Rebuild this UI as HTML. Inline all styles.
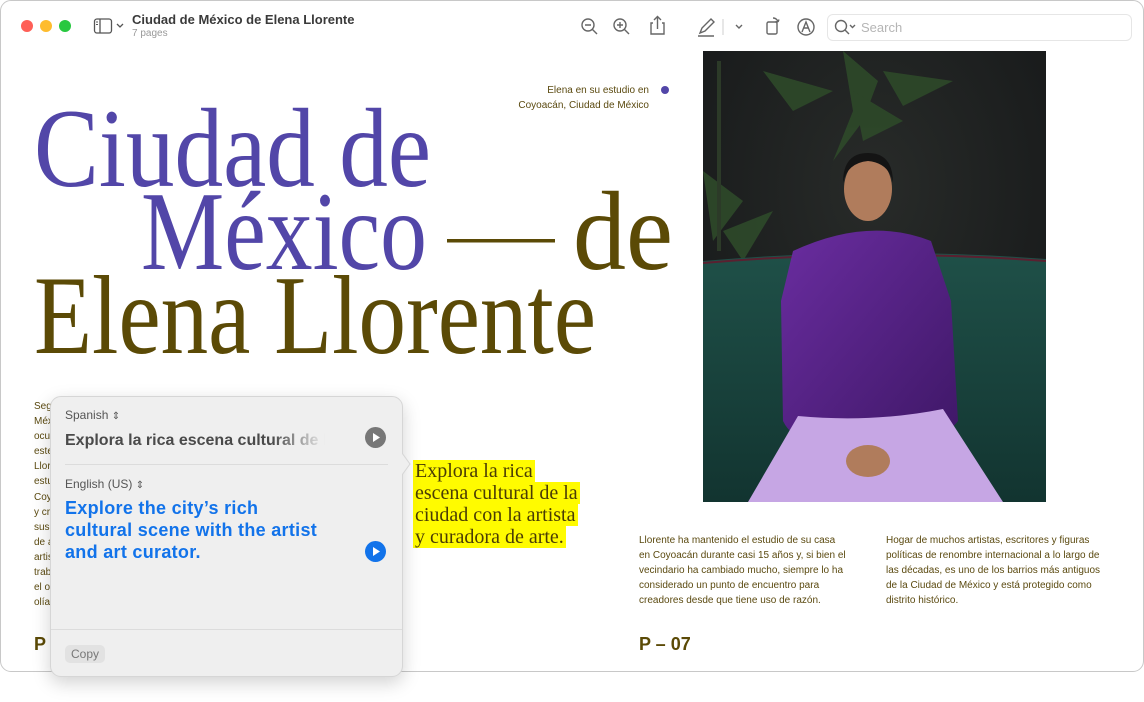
<!DOCTYPE html>
<html><head><meta charset="utf-8"><style>
*{margin:0;padding:0;box-sizing:border-box}
body{width:1144px;height:702px;background:#fff;position:relative;overflow:hidden;font-family:"Liberation Sans",sans-serif}
.win{position:absolute;left:0;top:0;width:1144px;height:672px;border:1px solid #c8c8c8;border-radius:11px;background:#fff;overflow:hidden}
.abs{position:absolute}
.dot{position:absolute;top:19px;width:12px;height:12px;border-radius:50%}
.sm{font-size:10px;color:#5b4a10;line-height:15.1px;position:absolute}
.pop{position:absolute;left:50px;top:396px;width:353px;height:281px;background:#efefef;border:1px solid #d6d6d6;border-radius:11px;box-shadow:0 6px 18px rgba(0,0,0,.18)}
</style></head><body>
<div class="win">
  <div class="dot" style="left:20px;background:#fe5f57"></div>
  <div class="dot" style="left:39px;background:#febc2e"></div>
  <div class="dot" style="left:58px;background:#28c840"></div>
  <svg class="abs" style="left:92px;top:16px" width="36" height="18" viewBox="0 0 36 18"><rect x="1.5" y="2" width="17" height="14" rx="2.5" fill="none" stroke="#555" stroke-width="1.3"/><line x1="7" y1="2" x2="7" y2="16" stroke="#555" stroke-width="1.3"/><line x1="3" y1="5" x2="5" y2="5" stroke="#555"/><line x1="3" y1="7.5" x2="5" y2="7.5" stroke="#555"/><path d="M24 7l3 3 3-3" fill="none" stroke="#555" stroke-width="1.3"/></svg>
  <div class="abs" style="left:131px;top:11px;font-size:13px;font-weight:bold;color:#3a3a3a">Ciudad de México de Elena Llorente</div>
  <div class="abs" style="left:131px;top:27px;font-size:10px;color:#999">7 pages</div>
  <svg class="abs" style="left:575px;top:12px" width="260" height="28" viewBox="0 0 260 28" fill="none" stroke="#666" stroke-width="1.4">
    <circle cx="12" cy="12" r="6"/><line x1="16.5" y1="16.5" x2="21" y2="21"/><line x1="9" y1="12" x2="15" y2="12"/>
    <circle cx="44" cy="12" r="6"/><line x1="48.5" y1="16.5" x2="53" y2="21"/><line x1="41" y1="12" x2="47" y2="12"/><line x1="44" y1="9" x2="44" y2="15"/>
    <path d="M77 10h-2v11h13V10h-2M81.5 16V4M78 7l3.5-3.5L85 7"/>
    <path d="M124 20l2-5 9-9 3 3-9 9zM122 23h16"/>
    <line x1="147" y1="6" x2="147" y2="22" stroke="#ddd"/>
    <path d="M160 12l3 3 3-3"/>
    <rect x="191" y="9" width="10" height="12" rx="1.5"/><path d="M197 5a5 5 0 0 1 5 4M202 9l1-2.5M202 9l-2.5-.5"/>
    <circle cx="230" cy="14" r="8"/><path d="M226 19l4-10 4 10M227.5 15h5"/>
  </svg>
  <div class="abs" style="left:826px;top:13px;width:305px;height:27px;border:1px solid #e6e6e6;border-radius:6px;background:#fff"></div>
  <svg class="abs" style="left:832px;top:17px" width="26" height="18" viewBox="0 0 26 18" fill="none" stroke="#666" stroke-width="1.4"><circle cx="8" cy="8" r="5.5"/><line x1="12" y1="12" x2="16" y2="16"/><path d="M17 7l2.5 2.5L22 7"/></svg>
  <div class="abs" style="left:860px;top:19px;font-size:13px;color:#b5b5b5">Search</div>

  <div class="sm" style="left:480px;width:168px;top:82px;text-align:right">Elena en su estudio en<br>Coyoacán, Ciudad de México</div>
  <div class="abs" style="left:660px;top:85px;width:8px;height:8px;border-radius:50%;background:#5246a8"></div>

  <svg class="abs" style="left:0;top:0" width="700" height="380" font-family="Liberation Serif, serif" font-size="112">
    <text x="33" y="185" fill="#5246a8" textLength="397" lengthAdjust="spacingAndGlyphs">Ciudad de</text>
    <text x="140" y="268" fill="#5246a8" textLength="286" lengthAdjust="spacingAndGlyphs">México</text>
    <rect x="446" y="238" width="108" height="3.5" fill="#5b4a06"/>
    <text x="572" y="268" fill="#5b4a06" textLength="100" lengthAdjust="spacingAndGlyphs">de</text>
    <text x="33" y="352" fill="#5b4a06" textLength="562" lengthAdjust="spacingAndGlyphs">Elena Llorente</text>
  </svg>

  <div class="sm" style="left:33px;top:398px">Seg<br>Méx<br>ocu<br>este<br>Llor<br>estu<br>Coy<br>y cr<br>sus<br>de a<br>artis<br>trab<br>el o<br>olía</div>
  <div class="abs" style="left:33px;top:633px;font-size:18px;font-weight:bold;color:#5b4a06">P</div>

  <svg class="abs" style="left:702px;top:50px" width="343" height="451" viewBox="0 0 343 451">
    <defs>
      <radialGradient id="bg" cx=".5" cy=".3" r=".7"><stop offset="0" stop-color="#282b29"/><stop offset="1" stop-color="#161819"/></radialGradient>
      <linearGradient id="cou" x1="0" y1="0" x2="0" y2="1"><stop offset="0" stop-color="#1f5048"/><stop offset="1" stop-color="#123430"/></linearGradient>
      <linearGradient id="sw" x1="0" y1="0" x2="1" y2="1"><stop offset="0" stop-color="#6a2da0"/><stop offset="1" stop-color="#3e1766"/></linearGradient>
    </defs>
    <rect width="343" height="451" fill="url(#bg)"/>
    <g fill="#2e4a2a" opacity=".9">
      <path d="M140 0 L150 60 L130 110 L160 70 L175 30 Z"/>
      <path d="M60 20 L130 40 L90 60 Z"/><path d="M180 20 L250 30 L200 55 Z"/>
      <path d="M0 120 L40 150 L10 190 Z"/><path d="M20 180 L70 160 L40 210 Z"/>
      <path d="M150 40 L200 70 L160 90 Z"/>
    </g>
    <rect x="14" y="10" width="4" height="190" fill="#2c3a28"/>
    <path d="M0 210 Q170 195 343 208 L343 451 L0 451 Z" fill="url(#cou)"/>
    <path d="M0 212 Q170 197 343 210" stroke="#5a2030" stroke-width="2" fill="none"/>
    <ellipse cx="165" cy="138" rx="24" ry="32" fill="#b07c5c"/>
    <path d="M140 132 Q140 102 165 102 Q190 102 190 132 Q186 112 165 110 Q144 112 140 132Z" fill="#141414"/>
    <path d="M90 200 Q165 165 228 190 L248 250 L255 370 Q240 390 220 375 L200 395 L135 395 L110 385 Q90 390 80 370 L78 250 Z" fill="url(#sw)"/>
    <path d="M45 451 L95 365 Q170 372 240 358 L300 451 Z" fill="#c6a6e4"/>
    <ellipse cx="165" cy="410" rx="22" ry="16" fill="#b07c5c"/>
  </svg>

  <div class="sm" style="left:638px;top:532px;width:210px">Llorente ha mantenido el estudio de su casa en Coyoacán durante casi 15 años y, si bien el vecindario ha cambiado mucho, siempre lo ha considerado un punto de encuentro para creadores desde que tiene uso de razón.</div>
  <div class="sm" style="left:885px;top:532px;width:225px">Hogar de muchos artistas, escritores y figuras políticas de renombre internacional a lo largo de las décadas, es uno de los barrios más antiguos de la Ciudad de México y está protegido como distrito histórico.</div>
  <div class="abs" style="left:638px;top:633px;font-size:18px;font-weight:bold;color:#5b4a06">P – 07</div>

  <div class="abs" style="left:412px;top:459px;font-family:'Liberation Serif',serif;font-size:20px;line-height:22px;color:#4a3c05">
    <span style="background:#fffb00;padding:0 2px;box-decoration-break:clone;-webkit-box-decoration-break:clone">Explora la rica<br>escena cultural de la<br>ciudad con la artista<br>y curadora de arte.</span>
  </div>
</div>

<div class="pop">
  <svg class="abs" style="left:351px;top:56px" width="10" height="24"><path d="M0 0 L8 11 L0 22 Z" fill="#efefef"/><path d="M0 0 L8 11 L0 22" fill="none" stroke="#d6d6d6"/></svg>
  <div class="abs" style="left:14px;top:11px;font-size:12px;color:#555">Spanish <span style="font-size:10px">⇕</span></div>
  <div class="abs" style="left:14px;top:35px;font-size:16px;font-weight:bold;color:#4a4a4a;white-space:nowrap;width:260px;overflow:hidden;-webkit-mask-image:linear-gradient(90deg,#000 80%,transparent);mask-image:linear-gradient(90deg,#000 80%,transparent)">Explora la rica escena cultural de la</div>
  <div class="abs" style="left:314px;top:30px;width:21px;height:21px;border-radius:50%;background:#777"><svg width="21" height="21"><path d="M8 6l7 4.5-7 4.5z" fill="#fff"/></svg></div>
  <div class="abs" style="left:14px;top:67px;width:323px;height:1px;background:#dcdcdc"></div>
  <div class="abs" style="left:14px;top:80px;font-size:12px;color:#555">English (US) <span style="font-size:10px">⇕</span></div>
  <div class="abs" style="left:14px;top:100px;font-size:18px;letter-spacing:.3px;font-weight:bold;line-height:22px;color:#1273ea">Explore the city’s rich<br>cultural scene with the artist<br>and art curator.</div>
  <div class="abs" style="left:314px;top:144px;width:21px;height:21px;border-radius:50%;background:#1273ea"><svg width="21" height="21"><path d="M8 6l7 4.5-7 4.5z" fill="#fff"/></svg></div>
  <div class="abs" style="left:0;top:232px;width:351px;height:1px;background:#dcdcdc"></div>
  <div class="abs" style="left:14px;top:248px;padding:2px 6px;border-radius:5px;background:#e2e2e2;font-size:12px;color:#777">Copy</div>
</div>
</body></html>
